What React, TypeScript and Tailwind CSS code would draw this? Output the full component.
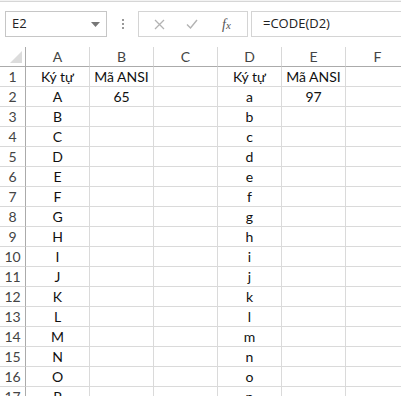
import { Fragment } from "react";

const cols = ["A", "B", "C", "D", "E", "F"];

const upper = "ABCDEFGHIJKLMNOP".split("");
const lower = "abcdefghijklmnop".split("");

const rows: string[][] = [
  ["Ký tự", "Mã ANSI", "", "Ký tự", "Mã ANSI", ""],
  ...upper.map((u, i) => [u, i === 0 ? "65" : "", "", lower[i], i === 0 ? "97" : "", ""]),
];

function NameBox() {
  return (
    <div className="w-[102px] h-[26px] border border-[#c6c6c6] flex items-center justify-between pl-[6px] pr-[6px]">
      <span className="text-[13px] text-[#222]">E2</span>
      <svg width="9" height="5" viewBox="0 0 9 5">
        <path d="M0 0h9L4.5 5z" fill="#777" />
      </svg>
    </div>
  );
}

function FormulaButtons() {
  return (
    <div className="w-[110px] h-[26px] border border-[#d4d4d4] flex items-center pl-[15px]">
      <svg width="11" height="11" viewBox="0 0 11 11" className="mr-[21px]">
        <path d="M1 1l9 9M10 1l-9 9" stroke="#b3b3b3" strokeWidth="1.3" />
      </svg>
      <svg width="12" height="10" viewBox="0 0 12 10" className="mr-[24px]">
        <path d="M1 5.5l3.5 3.5L11 1" stroke="#b3b3b3" strokeWidth="1.4" fill="none" />
      </svg>
      <span className="text-[14px] italic text-[#555]" style={{ fontFamily: "'Liberation Serif', serif" }}>
        f<span className="text-[11px]">x</span>
      </span>
    </div>
  );
}

export default function App() {
  return (
    <div
      className="w-[401px] h-[396px] overflow-hidden bg-white"
      style={{ fontFamily: "Lato, 'Open Sans', sans-serif" }}
    >
      {/* ribbon edge */}
      <div className="h-[2px] border-b border-[#d6d6d6] bg-[#f3f3f3]" />

      {/* formula bar */}
      <div className="h-[45px] flex items-start pt-[9px] pl-[5px]" style={{ fontFamily: "'Open Sans', sans-serif" }}>
        <NameBox />
        <div className="w-[31px] h-[26px] flex flex-col items-center justify-center gap-[2px]">
          <span className="w-[2px] h-[2px] bg-[#999]" />
          <span className="w-[2px] h-[2px] bg-[#999]" />
          <span className="w-[2px] h-[2px] bg-[#999]" />
        </div>
        <FormulaButtons />
        <div className="ml-[3px] flex-1 h-[26px] border border-r-0 border-[#d4d4d4] flex items-center pl-[11px]">
          <span className="text-[13px] text-[#222]">=CODE(D2)</span>
        </div>
      </div>

      {/* sheet */}
      <div className="grid grid-cols-[26px_64px_64px_64px_64px_64px_64px] auto-rows-[20px]">
        <div className="border-r border-b border-[#ababab] relative">
          <svg width="12" height="12" viewBox="0 0 12 12" className="absolute right-[3px] bottom-[3px]">
            <path d="M12 0v12H0z" fill="#dcdcdc" />
          </svg>
        </div>
        {cols.map((c) => (
          <div
            key={c}
            className="border-r border-b border-r-[#d8d8d8] border-b-[#ababab] flex items-center justify-center text-[14px] text-[#444]"
          >
            {c}
          </div>
        ))}

        {rows.map((r, i) => (
          <Fragment key={i}>
            <div className="border-r border-b border-r-[#ababab] border-b-[#d8d8d8] flex items-center justify-center text-[14px] text-[#444]">
              {i + 1}
            </div>
            {r.map((v, j) => (
              <div
                key={j}
                className="border-r border-b border-[#dadada] flex items-center justify-center text-[14px] text-[#111]"
              >
                {v}
              </div>
            ))}
          </Fragment>
        ))}
      </div>
    </div>
  );
}
